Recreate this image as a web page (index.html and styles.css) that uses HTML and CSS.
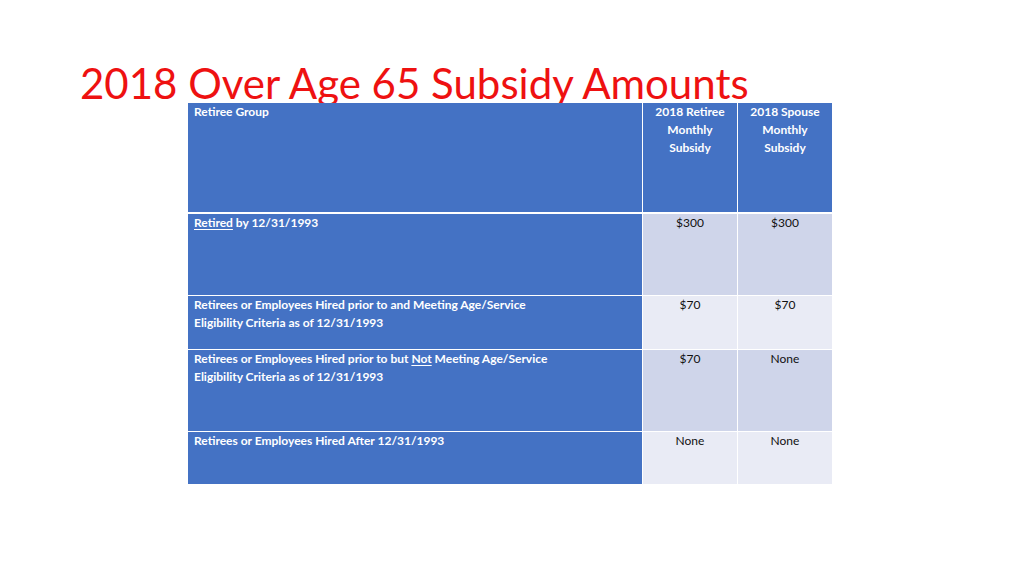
FILE: index.html
```html
<!DOCTYPE html>
<html>
<head>
<meta charset="utf-8">
<link rel="stylesheet" href="styles.css">
</head>
<body>
<div class="slide">
  <h1 class="title">2018 Over Age 65 Subsidy Amounts</h1>
  <div class="table">
    <div class="cell head group">Retiree Group</div>
    <div class="cell head num">2018 Retiree<br>Monthly<br>Subsidy</div>
    <div class="cell head num">2018 Spouse<br>Monthly<br>Subsidy</div>

    <div class="cell group r1 first"><u>Retired</u> by 12/31/1993</div>
    <div class="cell val dark r1 first">$300</div>
    <div class="cell val dark r1 first">$300</div>

    <div class="cell group r2">Retirees or Employees Hired prior to and Meeting Age/Service<br>Eligibility Criteria as of 12/31/1993</div>
    <div class="cell val light r2">$70</div>
    <div class="cell val light r2">$70</div>

    <div class="cell group r3">Retirees or Employees Hired prior to but <u>Not</u> Meeting Age/Service<br>Eligibility Criteria as of 12/31/1993</div>
    <div class="cell val dark r3">$70</div>
    <div class="cell val dark r3">None</div>

    <div class="cell group r4">Retirees or Employees Hired After 12/31/1993</div>
    <div class="cell val light r4">None</div>
    <div class="cell val light r4">None</div>
  </div>
</div>
</body>
</html>
```
FILE: styles.css
```css
html, body {
  margin: 0;
  padding: 0;
  background: #ffffff;
}
.slide {
  width: 1024px;
  height: 576px;
  position: relative;
  font-family: "Lato", "Open Sans", sans-serif;
}
.title {
  margin: 0;
  padding: 65px 0 0 80px;
  height: 38px;
  font-family: "Lato", sans-serif;
  font-weight: 400;
  font-size: 42px;
  line-height: 36px;
  color: #ee1111;
  white-space: nowrap;
  position: relative;
  z-index: 0;
}
.table {
  margin-left: 188px;
  width: 644px;
  display: grid;
  grid-template-columns: 454px 94px 94px;
  column-gap: 1px;
  row-gap: 1px;
  background: #ffffff;
  position: relative;
  z-index: 1;
}
.cell {
  font-size: 12px;
  line-height: 18px;
  padding: 0 6px 0 6px;
  box-sizing: border-box;
}
.head {
  background: #4472c4;
  color: #ffffff;
  font-weight: 700;
  height: 109px;
  margin-bottom: 1px;
}
.head.num {
  text-align: center;
  padding-left: 2px;
  padding-right: 2px;
}
.group {
  background: #4472c4;
  color: #ffffff;
  font-weight: 700;
}
.val {
  color: #111111;
  text-align: center;
  font-weight: 400;
  font-size: 12px;
}
.dark { background: #cfd5ea; }
.light { background: #e9ebf5; }
.r1 { height: 81px; }
.r2 { height: 53px; }
.r3 { height: 81px; }
.r4 { height: 52px; }
u { text-underline-offset: 2px; }
```
